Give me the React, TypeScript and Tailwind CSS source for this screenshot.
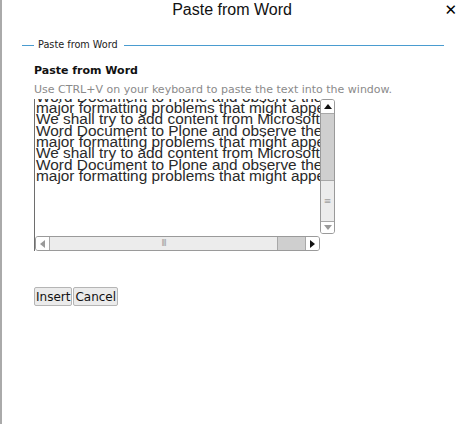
import React from "react"

const lines = [
    "Word Document to Plone and observe the",
    "major formatting problems that might appear",
    "We shall try to add content from Microsoft",
    "Word Document to Plone and observe the",
    "major formatting problems that might appear",
    "We shall try to add content from Microsoft",
    "Word Document to Plone and observe the",
    "major formatting problems that might appear",
]

// little triangles for the fake scrollbar buttons
function Arrow({ dir, dim }: { dir: "up" | "down" | "left" | "right"; dim?: boolean }) {
    const pts = {
        up: "1,6 5,1 9,6",
        down: "1,1 5,6 9,1",
        left: "6,1 1,5 6,9",
        right: "1,1 6,5 1,9",
    }[dir]
    const vertical = dir === "up" || dir === "down"
    return (
        <svg width={vertical ? 10 : 7} height={vertical ? 7 : 10} viewBox={vertical ? "0 0 10 7" : "0 0 7 10"}>
            <polygon points={pts} fill={dim ? "#9a9a9a" : "#111"} />
        </svg>
    )
}

export default function App() {
    return (
        <div className="relative w-[460px] h-[424px] bg-white border-l-2 border-[#aaaaaa] font-['DejaVu_Sans',sans-serif] overflow-hidden">
            {/* dialog header */}
            <div className="relative h-[20px]">
                <div className="text-center pl-[2px] text-[16px] leading-[19px] text-[#111] font-['Liberation_Sans',sans-serif]">
                    Paste from Word
                </div>
                <div className="absolute right-[3px] top-[3px] text-[15px] leading-[15px] font-bold text-black">✕</div>
            </div>

            <div className="pl-[20px] pr-[16px] pt-[19px]">
                {/* legend */}
                <div className="flex items-center gap-[4px] h-[12px]">
                    <div className="w-[12px] h-px bg-[#4a9cd0]" />
                    <span className="text-[9.7px] leading-[12px] text-[#222]">Paste from Word</span>
                    <div className="flex-1 h-px bg-[#4a9cd0] ml-[2px]" />
                </div>

                <div className="pl-[12px] pt-[13px]">
                    <div className="text-[11px] leading-[14px] font-bold text-[#111]">Paste from Word</div>
                    <div className="mt-[5px] text-[11px] leading-[14px] text-[#8a8a8a]">
                        Use CTRL+V on your keyboard to paste the text into the window.
                    </div>

                    {/* textarea with scrollbars */}
                    <div className="mt-[2px] w-[301px] h-[152px] flex">
                        <div className="flex-1 min-w-0 flex flex-col border-l border-[#6e6e6e]">
                            <div className="flex-1 min-h-0 overflow-hidden pl-[1px]">
                                <div className="mt-[-8.5px] font-['Liberation_Sans',sans-serif] text-[15.4px] leading-[11.4px] text-[#2a2a2a] whitespace-pre">
                                    {lines.map((l, i) => (
                                        <div key={i} className="h-[11.4px]">{l}</div>
                                    ))}
                                </div>
                            </div>
                            {/* horizontal scrollbar */}
                            <div className="h-[15px] shrink-0 flex border border-[#9a9a9a] rounded-[3px] overflow-hidden bg-[#ececec]">
                                <div className="w-[14px] bg-white border-r border-[#a8a8a8] flex items-center justify-center">
                                    <Arrow dir="left" dim />
                                </div>
                                <div className="flex-1 flex items-center justify-center text-[8px] leading-none text-[#a0a0a0] tracking-[-1px]">
                                    III
                                </div>
                                <div className="w-[28px] bg-[#cfcfcf] border-l border-[#a8a8a8]" />
                                <div className="w-[14px] bg-white border-l border-[#a8a8a8] flex items-center justify-center">
                                    <Arrow dir="right" />
                                </div>
                            </div>
                        </div>
                        <div className="w-[15px] shrink-0 flex flex-col">
                            {/* vertical scrollbar */}
                            <div className="h-[135px] flex flex-col border border-[#9a9a9a] rounded-[3px] overflow-hidden">
                                <div className="h-[14px] bg-white border-b border-[#a8a8a8] flex items-center justify-center">
                                    <Arrow dir="up" />
                                </div>
                                <div className="h-[67px] bg-[#cfcfcf] border-b border-[#a8a8a8]" />
                                <div className="flex-1 bg-[#ececec] flex items-center justify-center text-[9px] leading-none text-[#a0a0a0]">
                                    ≡
                                </div>
                                <div className="h-[12px] bg-white border-t border-[#a8a8a8] flex items-center justify-center">
                                    <Arrow dir="down" dim />
                                </div>
                            </div>
                        </div>
                    </div>

                    <div className="mt-[36px] flex gap-[1px]">
                        <button className="h-[19px] px-px bg-[#ebebeb] border border-[#b5b5b5] rounded-[2px] text-[12px] leading-[16px] text-[#111]">
                            Insert
                        </button>
                        <button className="h-[19px] px-px bg-[#ebebeb] border border-[#b5b5b5] rounded-[2px] text-[12px] leading-[16px] text-[#111]">
                            Cancel
                        </button>
                    </div>
                </div>
            </div>
        </div>
    )
}
